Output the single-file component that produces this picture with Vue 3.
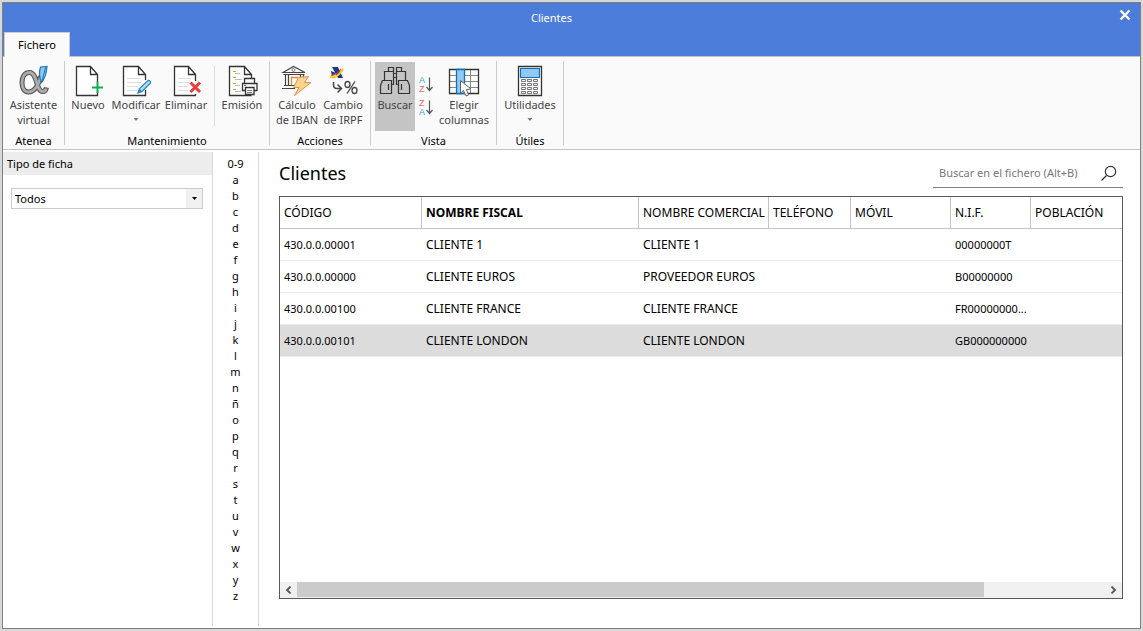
<script setup>
import { ref } from 'vue'

const letters = ['0-9', ...'abcdefghijklmnñopqrstuvwxyz']
const columns = ['CÓDIGO', 'NOMBRE FISCAL', 'NOMBRE COMERCIAL', 'TELÉFONO', 'MÓVIL', 'N.I.F.', 'POBLACIÓN']
const rows = [
  { code: '430.0.0.00001', fiscal: 'CLIENTE 1', comercial: 'CLIENTE 1', nif: '00000000T' },
  { code: '430.0.0.00000', fiscal: 'CLIENTE EUROS', comercial: 'PROVEEDOR EUROS', nif: 'B00000000' },
  { code: '430.0.0.00100', fiscal: 'CLIENTE FRANCE', comercial: 'CLIENTE FRANCE', nif: 'FR00000000...' },
  { code: '430.0.0.00101', fiscal: 'CLIENTE LONDON', comercial: 'CLIENTE LONDON', nif: 'GB000000000' }
]
const selected = ref(3)
const query = ref('')
const kind = ref('Todos')
</script>

<template>
  <div class="desktop">
    <div class="window">
      <header class="titlebar">
        <div class="title-row">
          <div class="title">Clientes</div>
          <button class="close" aria-label="Cerrar">
            <svg width="12" height="12" viewBox="0 0 12 12"><path d="M1.500 1.500l9 9M10.500 1.500l-9 9" stroke="#fff" stroke-width="2.400" /></svg>
          </button>
        </div>
        <nav class="tabs"><button class="tab">Fichero</button></nav>
      </header>

      <div class="ribbon">
        <section class="group g-atenea">
          <div class="tools">
            <button class="tool">
              <svg width="32" height="32" viewBox="0 0 32 32" fill="none">
                <path d="M22.500 11C21 19 17 27 10.500 27C6 27 4 22.500 4 17.500C4 12 6.500 7.500 11.500 7.500C19.500 7.500 18 26.500 24.500 26.500C26.500 26.500 28 25 28.500 22.500" stroke="#555" stroke-width="5" />
                <path d="M22.500 12C21 19 17 27 10.500 27C6 27 4 22.500 4 17.500C4 12 6.500 7.500 11.500 7.500C19.500 7.500 18 26.500 24.500 26.500C26.500 26.500 28 25 28.200 23.500" stroke="#aaa" stroke-width="2.800" />
                <path d="M22.500 2L29 1.500C28.500 8 26.500 14 23.500 17.500C21.500 13 21 7 22.500 2Z" fill="#8fc7ee" stroke="#1976b8" stroke-width="1.200" />
                <path d="M27.500 2.500L24 16" stroke="#1976b8" />
              </svg>
              <span>Asistente<br>virtual</span>
            </button>
          </div>
          <h2>Atenea</h2>
        </section>

        <section class="group g-mant">
          <div class="tools">
            <button class="tool">
              <svg width="32" height="32" viewBox="0 0 32 32" fill="none">
                <path d="M25.500 17V9.500L18.500 1.500H4.500V30.500H25.500V27M18.500 1.500V9.500H25.500" fill="#fff" stroke="#333" stroke-width="1.300" />
                <path d="M25.500 16.500V28M20 22.500H31" stroke="#13ac50" stroke-width="2" />
              </svg>
              <span>Nuevo</span>
            </button>
            <button class="tool t-mod">
              <svg width="32" height="32" viewBox="0 0 32 32" fill="none">
                <path d="M25.500 15V9.500L18.500 1.500H3.500V30.500H25.500V25M18.500 1.500V9.500H25.500" fill="#fff" stroke="#333" stroke-width="1.300" />
                <path d="M7 13.500H21M7 17.500H21M7 21.500H18M7 25.500H17" stroke="#ddd" />
                <path d="M18 28L19.500 23.500L28 15.500Q30.500 15 30.500 18L22 26.500Z" fill="#b5dcf5" stroke="#2388cb" stroke-width="1.300" />
                <path d="M18 28L19.500 23.500L22 26.500Z" fill="#2388cb" />
              </svg>
              <span>Modificar</span>
              <i class="caret"></i>
            </button>
            <button class="tool t-del">
              <svg width="32" height="32" viewBox="0 0 32 32" fill="none">
                <path d="M25.500 16V9.500L18.500 1.500H4.500V30.500H25.500V29M18.500 1.500V9.500H25.500" fill="#fff" stroke="#333" stroke-width="1.300" />
                <path d="M8 13.500H21M8 17.500H19M8 21.500H18M8 25.500H18" stroke="#ddd" />
                <path d="M20.500 17.500L30 27M30 17.500L20.500 27" stroke="#eb3c3c" stroke-width="3" />
              </svg>
              <span>Eliminar</span>
            </button>
            <div class="divider"></div>
            <button class="tool t-emi">
              <svg width="32" height="32" viewBox="0 0 32 32" fill="none">
                <path d="M25.500 14V9.500L18.500 1.500H3.500V30.500H25.500M18.500 1.500V9.500H25.500" fill="#fff" stroke="#333" stroke-width="1.300" />
                <path d="M7 6.500H10M7 12.500H10M7 18.500H10M7 24.500H10" stroke="#f29a1f" stroke-width="1.200" />
                <path d="M9 8.500H14M9 14.500H16M9 20.500H14M9 26.500H15" stroke="#bbb" />
                <path d="M18.500 19.500V13.500H28.500V19.500" fill="#fff" stroke="#333" stroke-width="1.300" />
                <path d="M16.500 18.500H31V25.500H16.500Z" fill="#fff" stroke="#333" stroke-width="1.300" />
                <path d="M19.500 22.500H28V29.500H19.500Z" fill="#fff" stroke="#333" stroke-width="1.300" />
                <path d="M21 25.500H26M21 27.500H26" stroke="#777" />
                <path d="M18 20.500H20" stroke="#2388cb" />
              </svg>
              <span>Emisión</span>
            </button>
          </div>
          <h2>Mantenimiento</h2>
        </section>

        <section class="group g-acc">
          <div class="tools">
            <button class="tool">
              <svg width="32" height="32" viewBox="0 0 32 32" fill="none">
                <path d="M2 7.500L12.500 1.500L24 7.500Z" fill="#fff" stroke="#444" stroke-width="1.200" />
                <path d="M2.500 9.500H23.500M4.500 10V20M7.500 10V20M19.500 10V15M22.500 10V13M3 20.500H16M1 23.500H14" stroke="#444" stroke-width="1.200" />
                <circle cx="12.500" cy="5" r="1.500" stroke="#777" />
                <path d="M10.500 20V12.500H17" stroke="#e18a36" stroke-width="1.300" />
                <path d="M17.500 12.500L27.500 11.500L23.500 17.500H30L13.500 30.500L18 22.500H12.500Z" fill="#f8d48c" stroke="#dd9350" />
              </svg>
              <span>Cálculo<br>de IBAN</span>
            </button>
            <button class="tool">
              <svg width="32" height="32" viewBox="0 0 32 32" fill="none">
                <path d="M5 2H11L16 13H11Z" fill="#123c88" />
                <path d="M4 6L9 8L5 11Z" fill="#123c88" />
                <path d="M3 12Q10 14 16 4" stroke="#f5c91e" stroke-width="2" />
                <path d="M4 10Q9 11 14 4" stroke="#e33" stroke-width="1.200" />
                <path d="M6.500 17V20Q6.500 23.500 10 23.500H14M10.500 19.500L14.500 23.500L10.500 27.500" stroke="#444" stroke-width="1.500" />
                <ellipse cx="20.500" cy="19.500" rx="2.500" ry="3" stroke="#444" stroke-width="1.300" />
                <ellipse cx="27.500" cy="25.500" rx="2.500" ry="3" stroke="#444" stroke-width="1.300" />
                <path d="M28 16.500L20 28.500" stroke="#444" stroke-width="1.300" />
              </svg>
              <span>Cambio<br>de IRPF</span>
            </button>
          </div>
          <h2>Acciones</h2>
        </section>

        <section class="group g-vista">
          <div class="tools">
            <button class="tool pressed">
              <svg width="32" height="32" viewBox="0 0 32 32" fill="none" stroke="#333" stroke-width="1.200">
                <path d="M9.500 6.500V2.500H14.500V6.500M17.500 6.500V2.500H22.500V6.500M5.500 15.500V6.500H14.500V15.500M17.500 15.500V6.500H26.500V15.500M14.500 8.500H17.500M14.500 12.500H17.500" />
                <path d="M3.500 15.500H12.500V28.500H1.500V20.500ZM19.500 15.500H28.500L30.500 20.500V28.500H19.500ZM14.500 15V19.500H12.500M17.500 15V19.500H19.500M9.500 19V25M22.500 19V25" />
              </svg>
              <span>Buscar</span>
            </button>
            <div class="sorts">
              <button class="sort" aria-label="Orden ascendente">
                <svg width="16" height="18" viewBox="0 0 16 18">
                  <text x="0" y="8" fill="#42a0d8">A</text><text x="0" y="17" fill="#e8686b">Z</text>
                  <path d="M10.500 2.500V15M7.500 12L10.500 15.500L13.500 12" fill="none" stroke="#555" stroke-width="1.200" />
                </svg>
              </button>
              <button class="sort" aria-label="Orden descendente">
                <svg width="16" height="18" viewBox="0 0 16 18">
                  <text x="0" y="8" fill="#e8686b">Z</text><text x="0" y="17" fill="#42a0d8">A</text>
                  <path d="M10.500 2.500V15M7.500 12L10.500 15.500L13.500 12" fill="none" stroke="#555" stroke-width="1.200" />
                </svg>
              </button>
            </div>
            <button class="tool t-col">
              <svg width="32" height="32" viewBox="0 0 32 32" fill="none">
                <path d="M1.500 4.500H30.500V28.500H1.500Z" fill="#fff" />
                <path d="M1 10.500H31M1 16.500H31M1 22.500H31M22.500 4V28" stroke="#888" />
                <path d="M1.500 4.500H30.500V28.500H1.500Z" stroke="#333" stroke-width="1.300" />
                <path d="M8.500 4.500H16.500V28.500H8.500Z" fill="#91c9f2" stroke="#1070b8" stroke-width="1.300" />
                <path d="M12.500 15.500V28L15.500 25.500L18 31L20.500 30L18.500 24.500L23 24Z" fill="#fff" stroke="#666" />
              </svg>
              <span>Elegir<br>columnas</span>
            </button>
          </div>
          <h2>Vista</h2>
        </section>

        <section class="group g-util">
          <div class="tools">
            <button class="tool">
              <svg width="32" height="32" viewBox="0 0 32 32" fill="none">
                <path d="M4.500 1.500H27.500V30.500H4.500Z" fill="#fff" stroke="#333" stroke-width="1.300" />
                <path d="M6.500 3.500H25.500V12.500H6.500Z" fill="#91c9f2" stroke="#1070b8" stroke-width="1.200" />
                <g stroke="#777">
                  <path d="M7.500 14.500h4v2h-4zM13.500 14.500h4v2h-4zM19.500 14.500h4v2h-4zM7.500 18.500h4v2h-4zM13.500 18.500h4v2h-4zM19.500 18.500h4v2h-4zM7.500 22.500h4v2h-4zM13.500 22.500h4v2h-4zM19.500 22.500h4v2h-4zM7.500 26.500h4v2h-4zM13.500 26.500h4v2h-4zM19.500 26.500h4v2h-4z" />
                </g>
              </svg>
              <span>Utilidades</span>
              <i class="caret"></i>
            </button>
          </div>
          <h2>Útiles</h2>
        </section>
      </div>

      <div class="body">
        <aside class="sidebar">
          <label class="side-head" for="kind">Tipo de ficha</label>
          <div class="select-box">
            <select id="kind" v-model="kind"><option>Todos</option></select>
            <span class="select-arrow"><svg width="5" height="3" viewBox="0 0 5 3"><path d="M0 0H5L2.500 3Z" fill="#000" /></svg></span>
          </div>
        </aside>

        <nav class="index">
          <button v-for="l in letters" :key="l">{{ l }}</button>
        </nav>

        <main class="content">
          <div class="content-head">
            <h1>Clientes</h1>
            <div class="search">
              <input v-model="query" type="text" aria-label="Buscar en el fichero" placeholder="Buscar en el fichero (Alt+B)">
              <button aria-label="Buscar">
                <svg width="16" height="16" viewBox="0 0 16 16" fill="none" stroke="#333"><circle cx="9.500" cy="6.500" r="5.200" stroke-width="1.200" /><path d="M5.500 10.500L0.500 15.500" stroke-width="1.300" /></svg>
              </button>
            </div>
          </div>
          <div class="grid">
            <table>
              <colgroup><col class="c1"><col class="c2"><col class="c3"><col class="c4"><col class="c5"><col class="c6"><col></colgroup>
              <thead>
                <tr><th v-for="(c, i) in columns" :key="c" scope="col" :class="{ sorted: i === 1 }">{{ c }}</th></tr>
              </thead>
              <tbody>
                <tr v-for="(r, i) in rows" :key="r.code" :class="{ selected: i === selected }" @click="selected = i">
                  <td class="num">{{ r.code }}</td><td>{{ r.fiscal }}</td><td>{{ r.comercial }}</td><td></td><td></td><td class="num">{{ r.nif }}</td><td></td>
                </tr>
              </tbody>
            </table>
            <div class="scrollbar">
              <button aria-label="Izquierda"><svg width="7" height="8" viewBox="0 0 7 8"><path d="M5.500 0.500L2 4L5.500 7.500" fill="none" stroke="#555" stroke-width="1.800" /></svg></button>
              <div class="track"><div class="thumb"></div></div>
              <button aria-label="Derecha"><svg width="7" height="8" viewBox="0 0 7 8"><path d="M1.500 0.500L5 4L1.500 7.500" fill="none" stroke="#555" stroke-width="1.800" /></svg></button>
            </div>
          </div>
        </main>
      </div>
    </div>
  </div>
</template>

<style>
body { margin: 0; background: #d8d8d8; }
</style>

<style scoped>
* { box-sizing: border-box; }
button, input, select { font: inherit; color: inherit; border: 0; padding: 0; margin: 0; background: none; border-radius: 0; outline: 0; }
h1, h2 { margin: 0; font-weight: 400; }
svg { display: block; flex: none; }
.desktop { display: flex; min-height: 100vh; padding: 2px; background: #d8d8d8; font-family: "Noto Sans", "Open Sans", sans-serif; font-size: 11px; line-height: 15px; color: #000; }
.window { flex: 1; min-width: 0; display: flex; flex-direction: column; border: 1px solid #808080; background: #fff; }

.titlebar { background: #4d7ddb; }
.title-row { display: flex; height: 29px; }
.title { flex: 1; text-align: center; line-height: 30px; color: #fff; }
.close { width: 40px; height: 24px; padding-left: 10px; display: flex; align-items: center; justify-content: center; }
.tabs { display: flex; padding-left: 1px; height: 25px; }
.tab { position: relative; width: 66px; padding-bottom: 2px; background: #fafafa; border: 1px solid #ccc; border-bottom: 0; }

.ribbon { display: flex; padding: 4px 0; border-top: 1px solid #c4c4c4; border-bottom: 1px solid #c4c4c4; background: #fafafa; margin-top: -1px; }
.group { display: flex; flex-direction: column; border-right: 1px solid #ccc; }
.group h2 { font-size: 11px; line-height: 15px; text-align: center; }
.tools { display: flex; justify-content: center; padding: 1px 0 2px; }
.tool { display: flex; flex-direction: column; align-items: center; padding-top: 3px; height: 69px; color: #444; white-space: nowrap; }
.group h2 { margin-bottom: -3px; }
.caret { width: 5px; height: 3px; margin-top: 6px; background: #777; clip-path: polygon(0 0, 100% 0, 50% 100%); }
.g-atenea { width: 62px; }
.g-mant { width: 205px; }
.g-acc { width: 101px; }
.g-vista { width: 126px; }
.g-util { width: 67px; }
.g-mant .tools { justify-content: flex-start; }
.g-mant .tool { width: 46px; }
.g-mant .t-mod, .g-mant .t-del, .g-mant .t-emi { width: 50px; }
.divider { width: 1px; height: 60px; margin: 4px 2px 0 3px; background: #ddd; }
.g-acc .tool { width: 46px; }
.g-vista .tools { justify-content: flex-start; padding-left: 4px; }
.pressed { width: 40px; background: #c4c4c4; }
.sorts { display: flex; flex-direction: column; gap: 5px; padding: 13px 3px 0 4px; }
.sort text { font-family: "Liberation Sans", sans-serif; font-size: 9px; }
.t-col { width: 52px; }
.group { height: 84px; }

.body { flex: 1; display: flex; padding: 2px 0; }
.sidebar { width: 209px; flex: none; }
.side-head { display: block; height: 23px; line-height: 23px; padding-left: 4px; background: #ededed; }
.select-box { position: relative; margin: 13px 9px 0 8px; height: 21px; border: 1px solid #ccc; }
.select-box select { appearance: none; width: 100%; height: 19px; padding-left: 3px; }
.select-arrow { position: absolute; top: 0; right: 0; width: 16px; height: 19px; background: #f0f0f0; display: flex; align-items: center; justify-content: center; pointer-events: none; }
.index { width: 47px; flex: none; display: flex; flex-direction: column; align-items: center; padding-top: 4px; border-left: 1px solid #d8d8d8; border-right: 1px solid #d8d8d8; }
.index button { height: 16px; line-height: 16px; width: 40px; }
.content { flex: 1; min-width: 0; display: flex; flex-direction: column; padding: 6px 17px 27px 20px; }
.content-head { display: flex; justify-content: space-between; align-items: flex-start; height: 38px; }
h1 { font-size: 18px; line-height: 30px; }
.search { display: flex; align-items: center; width: 190px; height: 30px; border-bottom: 1px solid #808080; padding: 0 6px; }
.search input { flex: 1; min-width: 0; }
.search input::placeholder { color: #777; opacity: 1; }
.grid { flex: 1; display: flex; flex-direction: column; border: 1px solid #5a5a5a; font-size: 12px; }
table { width: 100%; table-layout: fixed; border-collapse: separate; border-spacing: 0; }
.c1 { width: 142px; } .c2 { width: 217px; } .c3 { width: 130px; } .c4 { width: 82px; } .c5 { width: 100px; } .c6 { width: 80px; }
th, td { height: 32px; padding: 0 0 0 4px; text-align: left; font-weight: 400; white-space: nowrap; }
th { border-right: 1px solid #c4c4c4; border-bottom: 1px solid #c4c4c4; }
th:last-child { border-right: 0; }
th.sorted { font-weight: 700; }
td { border-bottom: 1px solid #ececec; }
.selected td { background: #dcdcdc; }
.num { font-size: 11px; }
.scrollbar { display: flex; height: 16px; margin-top: auto; background: #f0f0f0; }
.scrollbar button { width: 17px; display: flex; align-items: center; justify-content: center; }
.track { flex: 1; display: flex; }
.thumb { width: 85%; height: 15px; background: #cbcbcb; }
</style>
